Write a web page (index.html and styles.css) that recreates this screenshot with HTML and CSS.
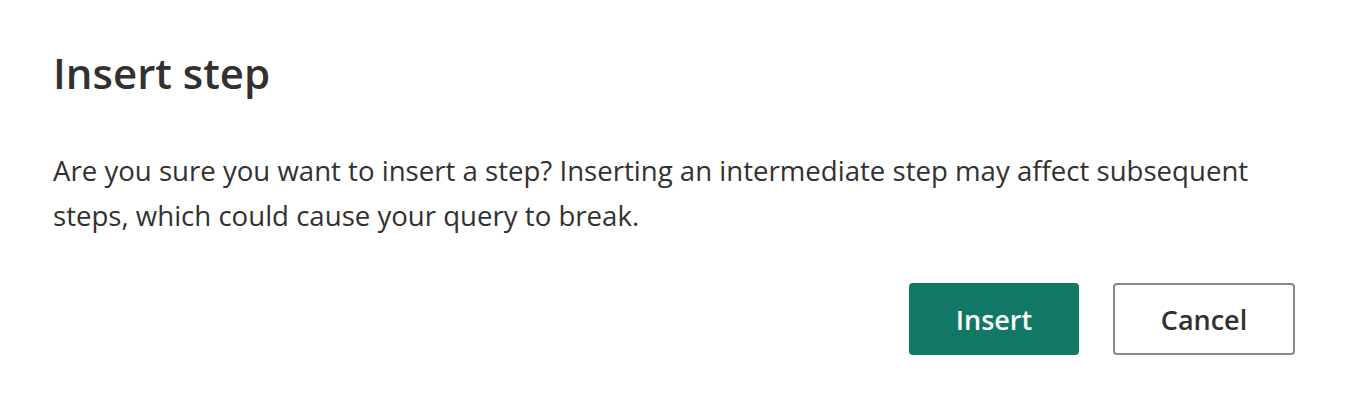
FILE: index.html
```html
<!DOCTYPE html>
<html lang="en">
<head>
<meta charset="utf-8">
<title>Insert step</title>
<link rel="stylesheet" href="styles.css">
</head>
<body>
<div class="dialog">
  <h1 class="title">Insert step</h1>
  <p class="message">Are you sure you want to insert a step? Inserting an intermediate step may affect subsequent steps, which could cause your query to break.</p>
  <div class="actions">
    <button class="btn btn-primary" type="button">Insert</button>
    <button class="btn btn-secondary" type="button">Cancel</button>
  </div>
</div>
</body>
</html>
```
FILE: styles.css
```css
html, body {
  margin: 0;
  padding: 0;
  background: #ffffff;
}
body {
  font-family: "Open Sans", "Noto Sans", "Liberation Sans", sans-serif;
  color: #323130;
}
.dialog {
  width: 1347px;
  height: 408px;
  box-sizing: border-box;
  padding: 41px 52px 0 53px;
  display: flex;
  flex-direction: column;
}
.title {
  margin: 0;
  font-size: 42px;
  font-weight: 600;
  line-height: 64px;
  color: #323130;
}
.message {
  margin: 43px 0 0 0;
  font-size: 27.6px;
  line-height: 45px;
  font-weight: 400;
  color: #323130;
}
.actions {
  margin-top: 45px;
  display: flex;
  justify-content: flex-end;
  gap: 34px;
}
.btn {
  height: 72px;
  border-radius: 4px;
  font-family: inherit;
  font-size: 27px;
  font-weight: 600;
  padding: 0;
  box-sizing: border-box;
  cursor: pointer;
}
.btn-primary {
  width: 170px;
  background: #117865;
  border: 2px solid #117865;
  color: #ffffff;
}
.btn-secondary {
  width: 182px;
  background: #ffffff;
  border: 2px solid #8a8886;
  color: #323130;
}
```
